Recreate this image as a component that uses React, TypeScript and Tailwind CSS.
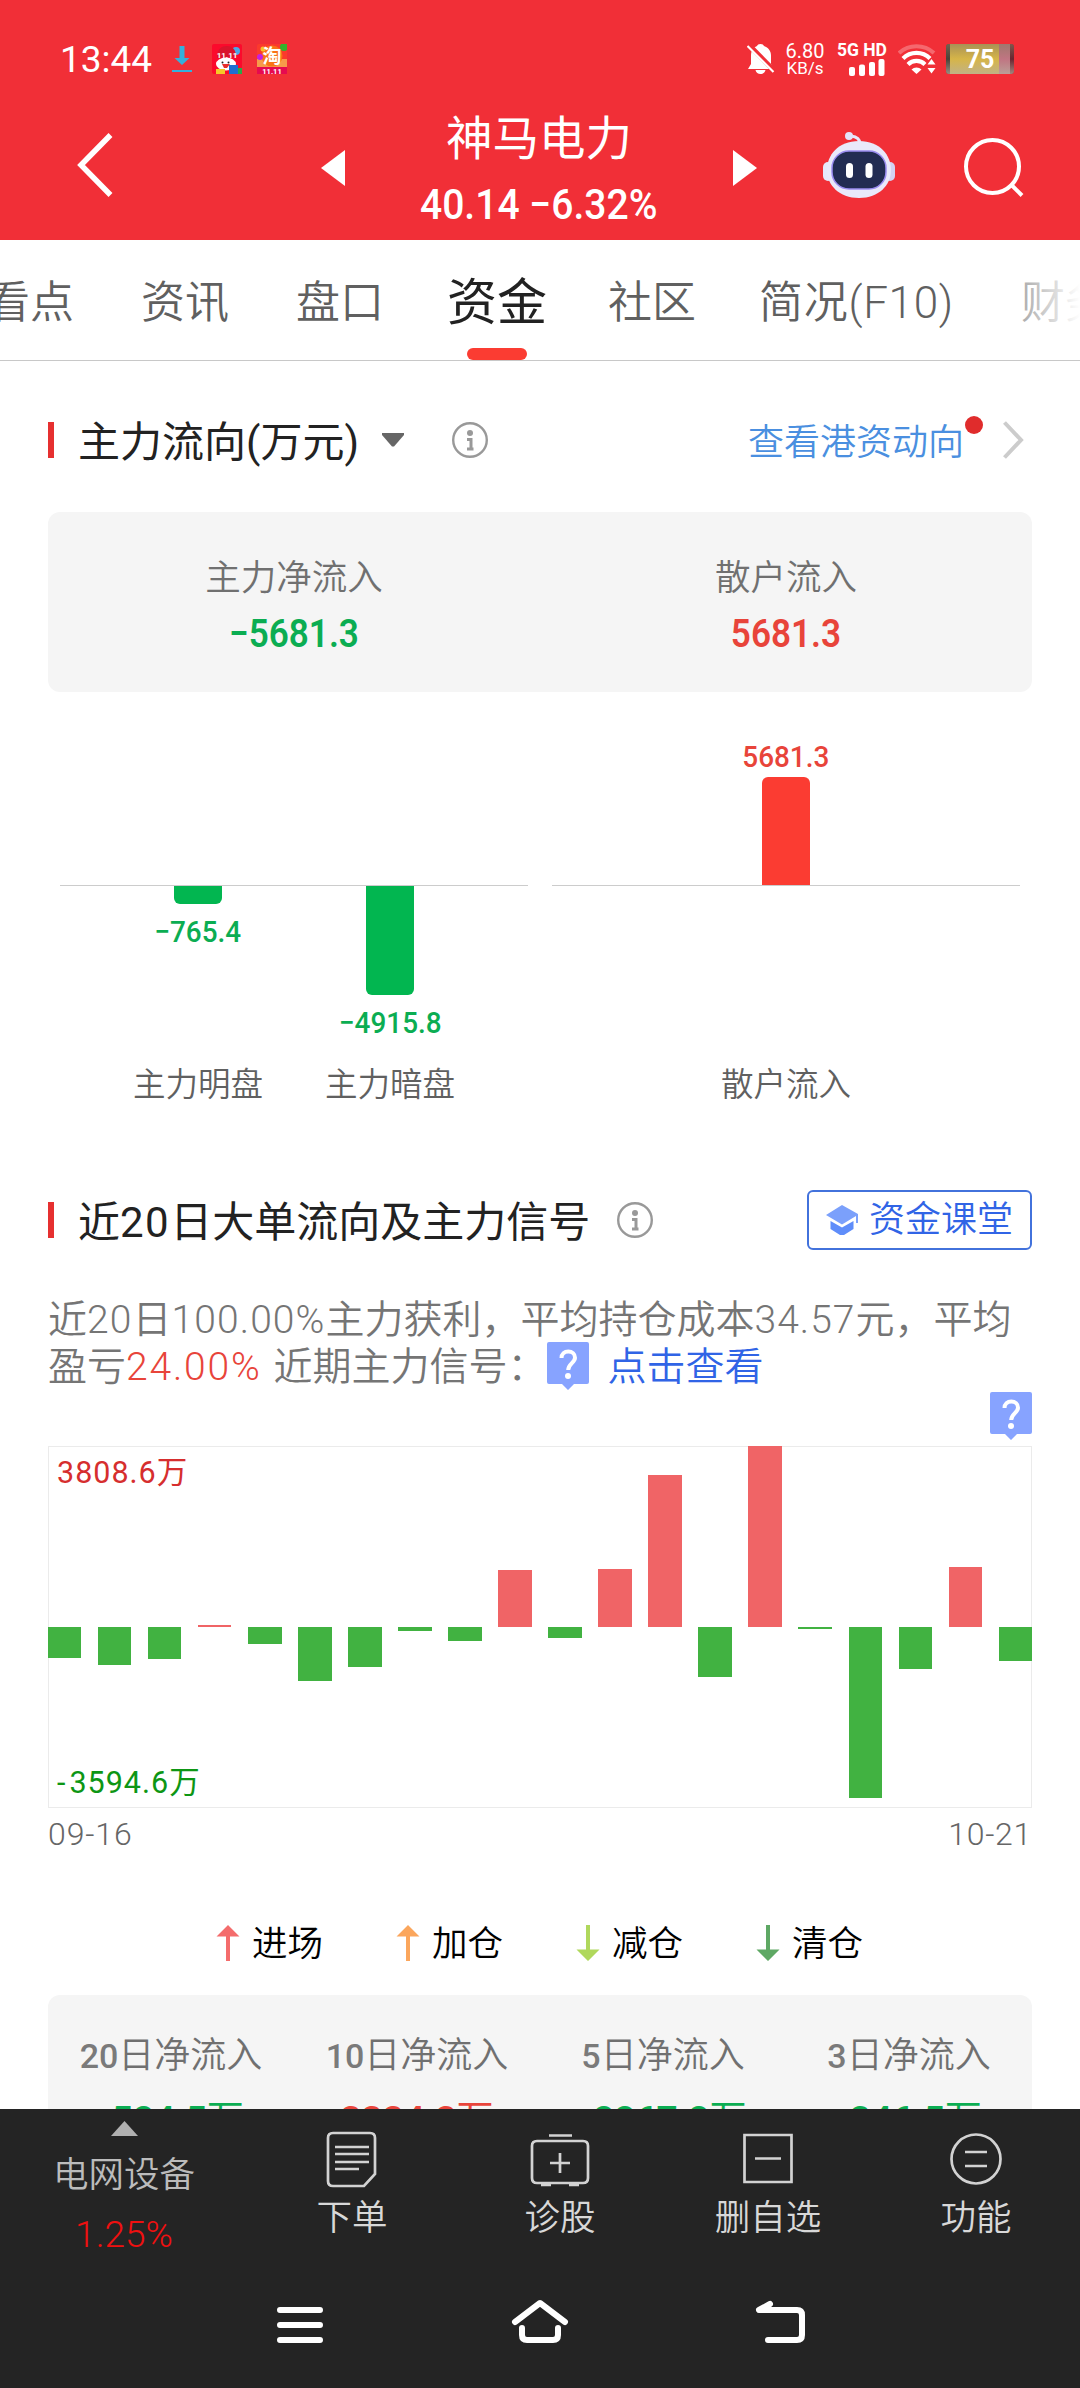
import type { ReactNode } from 'react';

const tabs = ['看点', '资讯', '盘口', '资金', '社区', '简况(F10)', '财务'];

// net large-order flow per trading day, 万
const dailyFlow = [
  -652, -800, -665, 32, -358, -1126, -852, -90, -305, 1199, -231, 1220, 3200, -1052, 3808.6, -28,
  -3594.6, -884, 1262, -715,
];
const FLOW_MAX = 3808.6;
const HALF_HEIGHT = 181;

const legend = [
  { label: '进场', color: '#f46c6c', up: true },
  { label: '加仓', color: '#fba65c', up: true },
  { label: '减仓', color: '#b0d85c', up: false },
  { label: '清仓', color: '#5ea864', up: false },
];

const periods = [
  { days: '20', value: '-524.5万', tone: 'text-[#0bad52]' },
  { days: '10', value: '3334.3万', tone: 'text-[#e8443a]' },
  { days: '5', value: '-2267.2万', tone: 'text-[#0bad52]' },
  { days: '3', value: '-346.5万', tone: 'text-[#0bad52]' },
];

/* ── Status bar ── */
function StatusBar() {
  return (
    <div className="flex h-24 items-center pt-[22px] pl-[60px] text-white">
      <span className="w-[92px] text-[37px] leading-none whitespace-nowrap">13:44</span>
      <svg className="ml-5" width="20" height="28" viewBox="0 0 20 28" fill="#35b0dc">
        <path d="M7.500 1h5v12h5L10 20 2.500 13h5zM0 25h20v2H0z" />
      </svg>
      <svg className="ml-5" width="30" height="30" viewBox="0 0 30 30">
        <rect width="30" height="30" rx="2" fill="#fb0a2c" />
        <circle cx="24" cy="7" r="4" fill="#4aa8e8" />
        <path d="M5 14C5 5 9 2 15 2s9 4 9 11z" fill="#d9142c" />
        <ellipse cx="14" cy="20" rx="10" ry="6.500" fill="#fff" />
        <path d="M10 20h8l-3 4h-3z" fill="#e8302c" />
        <rect x="4" y="25" width="9" height="5" fill="#f6c928" />
        <rect x="17" y="21" width="9" height="9" fill="#1f6fd0" />
        <rect x="26" y="24" width="4" height="6" fill="#2aa84a" />
        <circle cx="10.500" cy="18.500" r="1" fill="#222" />
        <circle cx="16.500" cy="18.500" r="1" fill="#222" />
        <text x="15" y="14" fontSize="8" fontWeight="700" fill="#fff" textAnchor="middle">
          11.11
        </text>
      </svg>
      <svg className="ml-[15px]" width="30" height="30" viewBox="0 0 30 30">
        <rect width="30" height="30" rx="2" fill="#fb3a2c" />
        <rect y="15" width="30" height="8" fill="#f79a4a" />
        <circle cx="15" cy="12" r="10.500" fill="#f97316" />
        <circle cx="27" cy="3" r="4" fill="#35b22c" />
        <circle cx="3" cy="13" r="3" fill="#c61ee0" />
        <circle cx="6" cy="5" r="2.500" fill="#f8c02c" />
        <rect y="23" width="30" height="7" fill="#e60a50" />
        <text x="15" y="19" fontSize="19" fontWeight="700" fill="#fff" textAnchor="middle">
          淘
        </text>
        <text x="15" y="29.500" fontSize="7.500" fontWeight="700" fill="#fff" textAnchor="middle">
          11.11
        </text>
      </svg>

      <svg className="ml-[460px]" width="28" height="30" viewBox="0 0 28 30">
        <path
          d="M13.500 0c2 0 3 .8 3.500 2 4.500 1.500 7 5 7 9.500V20l3 5H1l3-5v-8.500C4 7 6 3.500 10 2c.5-1.200 1.500-2 3.500-2zM8.500 26h10c-.5 2.500-2.500 4-5 4s-4.500-1.500-5-4z"
          fill="#fff"
        />
        <path d="M1 0l27 27.500" stroke="#f12f37" strokeWidth="5" />
        <path d="M.5 2l26 26" stroke="#fff" strokeWidth="2.200" />
      </svg>
      <div className="ml-2.5 flex w-10 flex-col items-center leading-none">
        <span className="text-[20px] leading-[18px]">6.80</span>
        <span className="text-[17px] leading-[16px]">KB/s</span>
      </div>
      <div className="ml-3 flex w-[50px] flex-col items-end">
        <span className="text-[17.5px] leading-[15px] font-bold whitespace-nowrap">5G HD</span>
        <svg className="mt-px mr-0.5" width="36" height="17" viewBox="0 0 36 17" fill="#fff">
          <rect y="8" width="6" height="9" rx="2" />
          <rect x="10" y="5.500" width="6" height="11.500" rx="2" />
          <rect x="20" y="3" width="6" height="14" rx="2" />
          <rect x="29.500" width="6" height="17" rx="2" />
        </svg>
      </div>
      <svg className="ml-[11px]" width="38" height="30" viewBox="0 0 38 30" fill="none" stroke="#fff">
        <path d="M1 9a26 26 0 0 1 35 0" strokeWidth="4" opacity=".28" />
        <path d="M5 14.500a19 19 0 0 1 27 0" strokeWidth="4.200" />
        <path d="M10 20.500a12 12 0 0 1 17 0" strokeWidth="4.200" />
        <path d="M13.500 25.500a7 7 0 0 1 10 0l-5 4.500z" fill="#fff" stroke="none" />
        <path d="M33.500 15l4 5.500h-8zM33.500 29.500l4-5.500h-8z" fill="#fff" stroke="none" />
      </svg>
      {/* metallic battery shell */}
      <div className="relative ml-2.5 flex h-[30px] w-[68px] items-center justify-center overflow-hidden rounded-[3px] bg-linear-to-r from-[#4a4238] to-[#6c2430]">
        <div className="absolute inset-y-0 right-1 left-1 bg-linear-to-r from-[#d6b548] from-82% to-[#c07582] to-82%" />
        <div className="absolute inset-0 bg-linear-to-b from-[#8a7a60]/60 via-transparent to-[#b8b0a0]/70" />
        <span className="relative text-[25px] leading-none font-bold">75</span>
      </div>
    </div>
  );
}

function Robot() {
  return (
    <svg className="-mt-[7px] ml-[66px]" width="72" height="68" viewBox="0 0 72 68">
      <path d="M37 13c0-6-4-7.500-9-8" fill="none" stroke="#e8e8fb" strokeWidth="3" />
      <circle cx="26" cy="5" r="4" fill="#e4e3fa" />
      <rect x="0" y="31" width="10" height="19" rx="5" fill="#e5e8fb" />
      <rect x="62" y="31" width="10" height="19" rx="5" fill="#d3d2f3" />
      <path d="M36 10c21 0 32 14 32 29S56 67 36 67 4 54 4 39s11-29 32-29z" fill="#e9e9fa" />
      <rect x="9" y="20" width="54" height="38" rx="17" fill="#222c52" stroke="#9a8cf0" strokeWidth="1.500" />
      <rect x="23" y="32" width="7" height="15" rx="3.500" fill="#fff" />
      <rect x="42.500" y="32" width="7" height="15" rx="3.500" fill="#fff" />
    </svg>
  );
}

/* ── Stock header ── */
function StockHeader() {
  return (
    <div className="flex h-36 items-center pl-[77px] text-white">
      <svg className="-mt-1.5" width="36" height="66" viewBox="0 0 36 66" fill="none" stroke="#fff" strokeWidth="5.500">
        <path d="M33.500 3L4 33l29.500 30" />
      </svg>
      <svg className="ml-[208px]" width="24" height="36" viewBox="0 0 24 36" fill="#fff">
        <path d="M24 0v36L0 18z" />
      </svg>
      <div className="flex w-[388px] flex-col items-center pt-2">
        <span className="text-[46.500px] leading-[64px]">神马电力</span>
        <span className="mt-0.5 scale-x-[.93] text-[42px] leading-[64px] font-medium whitespace-nowrap">40.14 −6.32%</span>
      </div>
      <svg width="24" height="36" viewBox="0 0 24 36" fill="#fff">
        <path d="M0 0v36l24-18z" />
      </svg>
      <Robot />
      <svg className="ml-[69px]" width="60" height="60" viewBox="0 0 60 60" fill="none" stroke="#fff" strokeWidth="4">
        <circle cx="28.500" cy="28.500" r="26.500" />
        <path d="M47.500 47L58 57.500" />
      </svg>
    </div>
  );
}

function InfoIcon({ className }: { className: string }) {
  return (
    <svg className={className} width="36" height="36" viewBox="0 0 36 36">
      <circle cx="18" cy="18" r="16.800" fill="none" stroke="#999" strokeWidth="2.400" />
      <circle cx="18" cy="11" r="3" fill="#999" />
      <path d="M15 17.500h4v9M15 27h6.500" fill="none" stroke="#999" strokeWidth="3" />
    </svg>
  );
}

function QuestionBadge({ className }: { className: string }) {
  return (
    <svg className={className} width="42" height="48" viewBox="0 0 42 48">
      <path d="M2 0h38a2 2 0 0 1 2 2v38a2 2 0 0 1-2 2H27l-6 6-6-6H2a2 2 0 0 1-2-2V2a2 2 0 0 1 2-2z" fill="#87a3ff" />
      <path d="M14.500 16c0-4 3-6.500 6.800-6.500s6.700 2.500 6.700 6.200c0 5-6.800 6-6.800 12.300" fill="none" stroke="#fff" strokeWidth="4" />
      <circle cx="21" cy="34" r="3" fill="#fff" />
    </svg>
  );
}

function SectionTitle({ children }: { children: ReactNode }) {
  return (
    <>
      <span className="h-9 w-1.5 bg-[#e63030]" />
      <h2 className="ml-6 pt-1.5 text-[42px] leading-none whitespace-nowrap text-[#222]">{children}</h2>
    </>
  );
}

/* ── Main vs. retail flow ── */
function MainFlow() {
  return (
    <section className="px-12">
      <div className="mt-[43px] flex h-[72px] items-center">
        <SectionTitle>主力流向(万元)</SectionTitle>
        <svg className="ml-[22px]" width="24" height="14" viewBox="0 0 24 14" fill="#666">
          <path d="M1 0h22v2L13 13.500h-2L1 2z" />
        </svg>
        <InfoIcon className="ml-[47px]" />
        <a className="relative ml-auto pt-1.5 text-[36px] leading-none font-[350] text-[#4a8fe0]">
          查看港资动向
          <i className="absolute -top-[3px] -right-[19px] size-[18px] rounded-full bg-[#e02c2c]" />
        </a>
        <svg className="mr-2 ml-[39px]" width="21" height="38" viewBox="0 0 21 38" fill="none" stroke="#ccc" strokeWidth="4">
          <path d="M1.500 1.500L18 19 1.500 36.500" />
        </svg>
      </div>

      <div className="mt-9 grid h-[180px] grid-cols-2 content-start rounded-xl bg-[#f5f5f5] pt-10 text-center">
        <span className="text-[35.500px] leading-[52px] font-[350] text-[#707070]">主力净流入</span>
        <span className="text-[35.500px] leading-[52px] font-[350] text-[#707070]">散户流入</span>
        <span className="scale-x-90 text-[39px] leading-[60px] font-semibold text-[#0bad52]">−5681.3</span>
        <span className="scale-x-90 text-[39px] leading-[60px] font-semibold text-[#e8443a]">5681.3</span>
      </div>

      <div className="mt-[31px] flex h-[325px] gap-6 px-3">
        <div className="flex h-full flex-1 flex-col">
          <div className="h-[163px] border-b border-[#ccc]" />
          <div className="flex pl-[42px]">
            <FlowBar height="h-[18px]" value="−765.4" />
            <FlowBar height="h-[109px]" value="−4915.8" />
          </div>
        </div>
        <div className="h-full flex-1">
          <div className="flex h-[163px] flex-col items-center justify-end border-b border-[#ccc]">
            <span className="scale-x-[.93] text-[30px] leading-10 font-medium text-[#e8443a]">5681.3</span>
            <span className="h-[108px] w-12 rounded-t-md bg-[#fb3c32]" />
          </div>
        </div>
      </div>

      <div className="mt-3 flex h-12 items-center pt-0.5 text-[32.500px] leading-none font-[350] text-[#606060]">
        <span className="ml-[54px] w-48 text-center">主力明盘</span>
        <span className="w-48 text-center">主力暗盘</span>
        <span className="ml-auto w-[468px] text-center">散户流入</span>
        <span className="w-3" />
      </div>
    </section>
  );
}

function FlowBar({ height, value }: { height: string; value: string }) {
  return (
    <div className="flex w-48 flex-col items-center">
      <span className={`${height} w-12 rounded-b-md bg-[#02b650]`} />
      <span className="mt-2 scale-x-[.93] text-[30px] leading-10 font-medium text-[#0bad52]">{value}</span>
    </div>
  );
}

/* ── 20-day chart ── */
function DailyChart() {
  return (
    <div className="relative h-[362px] border border-[#ebebeb]">
      <div className="-mx-px -mt-px flex h-[362px] justify-between">
        {dailyFlow.map((v, i) => {
          const px = Math.max(1.5, (Math.abs(v) / FLOW_MAX) * HALF_HEIGHT);
          return (
            <div key={i} className="flex w-[33.4px] flex-col">
              <div className="flex h-[181px] items-end">
                {v > 0 && <span className="w-full bg-[#f06466]" style={{ height: px }} />}
              </div>
              {v < 0 && <span className="w-full bg-[#41b241]" style={{ height: px }} />}
            </div>
          );
        })}
      </div>
      <span className="absolute top-1.5 left-2 text-[30.500px] leading-10 tracking-[1px] text-[#d62e2e]">3808.6万</span>
      <span className="absolute bottom-1 left-2 text-[30.500px] leading-10 tracking-[1px] text-[#0d9614]">
        <span className="tracking-[4px]">-</span>3594.6万
      </span>
    </div>
  );
}

function LegendArrow({ color, up }: { color: string; up: boolean }) {
  return (
    <svg className={up ? '' : 'rotate-180'} width="24" height="36" viewBox="0 0 24 36" fill={color}>
      <path d="M12 0l11.500 11.500H14V36h-4V11.500H.5z" />
    </svg>
  );
}

function BigOrders() {
  return (
    <section className="px-12">
      <div className="mt-[76px] flex h-[72px] items-center">
        <SectionTitle>
          近<span className="tracking-[1.5px]">20</span>日大单流向及主力信号
        </SectionTitle>
        <InfoIcon className="ml-[27px]" />
        <button className="ml-auto flex h-[60px] w-[225px] items-center rounded-md border-2 border-[#4272dc] pl-[16px] text-[36px] leading-none font-[350] text-[#3064e6]">
          <svg className="mr-2.5" width="34" height="32" viewBox="0 0 34 32" fill="#5f8dfa">
            <path d="M17 1l16 9v9h-2v-7L17 20.500 1 11z" fill="#7ba0fb" />
            <path d="M5.500 17L17 23.500 28.500 17v8L19 31h-4l-9.500-6z" />
          </svg>
          资金课堂
        </button>
      </div>

      <div className="mt-[41px] text-[39px] leading-[47px] font-[350] whitespace-nowrap text-[#757575]">
        <p className="h-[47px]">
          近<span className="tracking-[1.1px]">20</span>日<span className="tracking-[1.1px]">100.00%</span>主力获利，平均持仓成本
          <span className="tracking-[1px]">34.57</span>元，平均
        </p>
        <p className="flex h-[47px]">
          盈亏<span className="tracking-[1.8px] text-[#e8443a]">24.00%</span>
          <span className="ml-3">近期主力信号：</span>
          <QuestionBadge className="-mt-0.5" />
          <a className="ml-[19px] text-[#3064e6]">点击查看</a>
        </p>
      </div>
      <QuestionBadge className="mt-px mb-[6px] ml-auto" />

      <DailyChart />
      <div className="flex h-[51px] items-center justify-between pt-px text-[32px] font-light text-[#666]">
        <span className="tracking-[.9px]">09-16</span>
        <span className="tracking-[.7px]">10-21</span>
      </div>

      <div className="mt-[60px] flex h-[48px] items-center pl-[168px]">
        {legend.map((item) => (
          <div key={item.label} className="flex w-[180px] items-center gap-3 text-[35.500px] leading-none font-[350] text-black">
            <LegendArrow color={item.color} up={item.up} />
            <span className="pt-1">{item.label}</span>
          </div>
        ))}
      </div>

      <div className="mt-7 grid h-60 grid-cols-4 rounded-xl bg-[#f5f5f5] pt-[35px] text-center">
        {periods.map((p) => (
          <div key={p.days} className="flex flex-col whitespace-nowrap">
            <span className="text-[36px] leading-[52px] font-[350] text-[#707070]">
              <span className="text-[34px] font-medium text-[#7a7a7a]">{p.days}</span>日净流入
            </span>
            <span className={`mt-2.5 text-[37px] leading-[56px] font-semibold ${p.tone}`}>
              {p.value.slice(0, -1)}
              <span className="font-normal">{p.value.slice(-1)}</span>
            </span>
          </div>
        ))}
      </div>
    </section>
  );
}

/* ── Bottom toolbar ── */
const actions = [
  {
    label: '下单',
    icon: (
      <path d="M12 3h37q5 0 5 5v36L43 56H12q-5 0-5-5V8q0-5 5-5zM14 17h34M14 24h34M14 32h34M14 39h24" />
    ),
  },
  {
    label: '诊股',
    icon: (
      <path d="M20 5.500h23M8 11h46q5 0 5 5v32q0 5-5 5H8q-5 0-5-5V16q0-5 5-5zM31 23v20M21 33h20M12 55h10M40 55h10" />
    ),
  },
  { label: '删自选', icon: <path d="M7.500 5h47v47h-47zM18 28.500h26" /> },
  {
    label: '功能',
    icon: (
      <>
        <circle cx="31" cy="29" r="24.500" />
        <path d="M20 22h22M20 36h22" />
      </>
    ),
  },
];

const navIcons = [
  'M10 13h40M10 28h40M10 43h40',
  'M5 25L30 6l25 19M12 31v7q0 5 5 5h26q5 0 5-5v-7',
  'M20 7L9 13h38q5 0 5 5v20q0 5-5 5H18',
];

function BottomBar() {
  return (
    <footer className="flex h-[279px] flex-col bg-[#242424]">
      <div className="flex h-[156px]">
        <div className="flex w-[248px] flex-col items-center pt-3">
          <svg width="27" height="15" viewBox="0 0 27 15" fill="#b0b0b0">
            <path d="M13.500 0L27 15H0z" />
          </svg>
          <span className="mt-[13px] text-[35.500px] leading-[52px] font-[350] text-[#bcbcbc]">电网设备</span>
          <span className="mt-2 text-[37px] leading-[52px] font-light text-[#f01010]">1.25%</span>
        </div>
        {actions.map((a) => (
          <div key={a.label} className="flex w-52 flex-col items-center pt-[21px]">
            <svg width="62" height="58" viewBox="0 0 62 58" fill="none" stroke="#d2d2d2" strokeWidth="2.700">
              {a.icon}
            </svg>
            <span className="mt-1 text-[35.500px] leading-[52px] font-[350] text-[#d8d8d8]">{a.label}</span>
          </div>
        ))}
      </div>
      <div className="flex flex-1 items-start justify-center gap-[180px] pt-8 pb-10">
        {navIcons.map((d) => (
          <svg key={d} width="60" height="50" viewBox="0 0 60 50" fill="none" stroke="#fff" strokeWidth="6" strokeLinecap="round" strokeLinejoin="round">
            <path d={d} />
          </svg>
        ))}
      </div>
    </footer>
  );
}

export default function App() {
  return (
    <div className="flex h-[2388px] w-[1080px] flex-col overflow-hidden bg-white font-[Roboto,'Noto_Sans_CJK_SC',sans-serif]">
      <header className="h-60 bg-[#f12f37]">
        <StatusBar />
        <StockHeader />
      </header>

      <nav className="relative flex h-[121px] overflow-hidden border-b border-[#c8c8c8] text-[44px] whitespace-nowrap text-[#606060]">
        <div className="-ml-[14px] flex items-center gap-[67px]">
          {tabs.map((tab) =>
            tab === '资金' ? (
              <span key={tab} className="relative -mr-1.5 -ml-1 flex h-full items-center pt-1.5 text-[50px] text-[#222]">
                {tab}
                <i className="absolute bottom-0 left-1/2 h-3 w-[60px] -translate-x-1/2 rounded-full bg-[#fb3c32]" />
              </span>
            ) : (
              <span key={tab} className={tab === '简况(F10)' ? '-ml-1 pt-1.5 font-[350] tracking-[.7px]' : 'pt-1.5 font-[350]'}>
                {tab}
              </span>
            ),
          )}
        </div>
        <div className="absolute inset-y-0 right-0 w-[90px] bg-linear-to-r from-white/20 to-white" />
      </nav>

      <main className="min-h-0 flex-1 overflow-hidden">
        <MainFlow />
        <BigOrders />
      </main>

      <BottomBar />
    </div>
  );
}
